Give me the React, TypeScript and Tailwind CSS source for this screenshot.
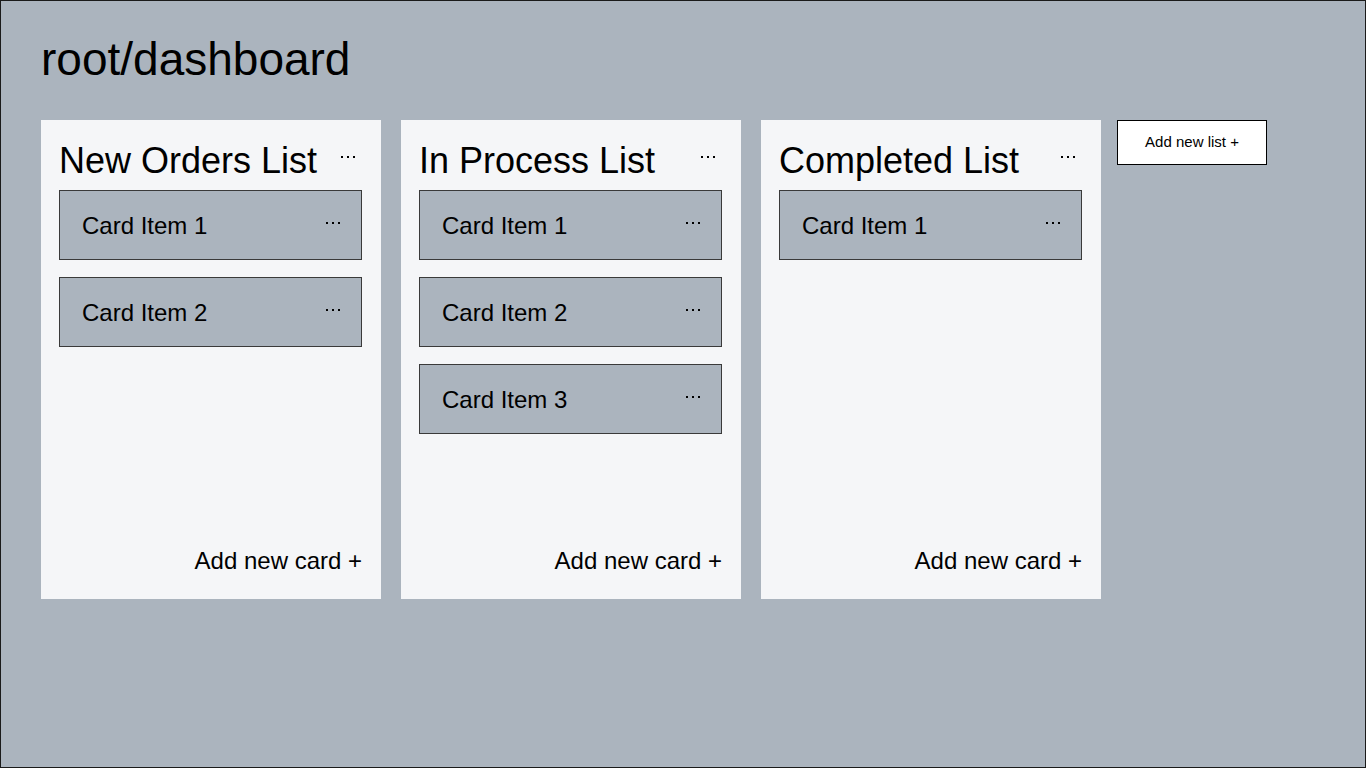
const lists = [
  { title: "New Orders List", cards: ["Card Item 1", "Card Item 2"] },
  { title: "In Process List", cards: ["Card Item 1", "Card Item 2", "Card Item 3"] },
  { title: "Completed List", cards: ["Card Item 1"] },
]

function Dots() {
  return (
    <div className="flex gap-[4px]">
      <span className="h-[2px] w-[2px] bg-black" />
      <span className="h-[2px] w-[2px] bg-black" />
      <span className="h-[2px] w-[2px] bg-black" />
    </div>
  )
}

function Card({ label }: { label: string }) {
  return (
    <div className="flex h-[70px] items-center justify-between border border-[#3a3a3a] bg-[#abb4be] pl-[22px] pr-[21px]">
      <span className="text-[24px] leading-[27px] text-black">{label}</span>
      <div className="mb-[4px]">
        <Dots />
      </div>
    </div>
  )
}

function List({ title, cards }: { title: string; cards: string[] }) {
  return (
    <div className="flex h-[479px] w-[340px] flex-col bg-[#f5f6f8] pb-[25px] pl-[18px] pr-[19px] pt-[18px]">
      <div className="mb-[6px] flex h-[46px] items-start justify-between">
        <h2 className="text-[36px] leading-[46px] text-black">{title}</h2>
        <div className="mr-[7px] mt-[18px]">
          <Dots />
        </div>
      </div>
      <div className="flex flex-1 flex-col gap-[17px]">
        {cards.map((c) => (
          <Card key={c} label={c} />
        ))}
      </div>
      <div className="text-right text-[24px] leading-[27px] text-black">Add new card +</div>
    </div>
  )
}

export default function App() {
  return (
    <div className="h-[768px] w-full border border-[#1a1a1a] bg-[#abb4be] px-[40px] pt-[33px] font-['Liberation_Sans',Arial,sans-serif]">
      <h1 className="text-[46px] leading-[50px] text-black">root/dashboard</h1>
      <div className="mt-[36px] flex items-start">
        <div className="flex items-start gap-[20px]">
          {lists.map((l) => (
            <List key={l.title} title={l.title} cards={l.cards} />
          ))}
        </div>
        <button className="ml-[16px] flex h-[45px] w-[150px] items-center justify-center border border-black bg-white pb-[1px] text-[15px] text-black">
          Add new list +
        </button>
      </div>
    </div>
  )
}
